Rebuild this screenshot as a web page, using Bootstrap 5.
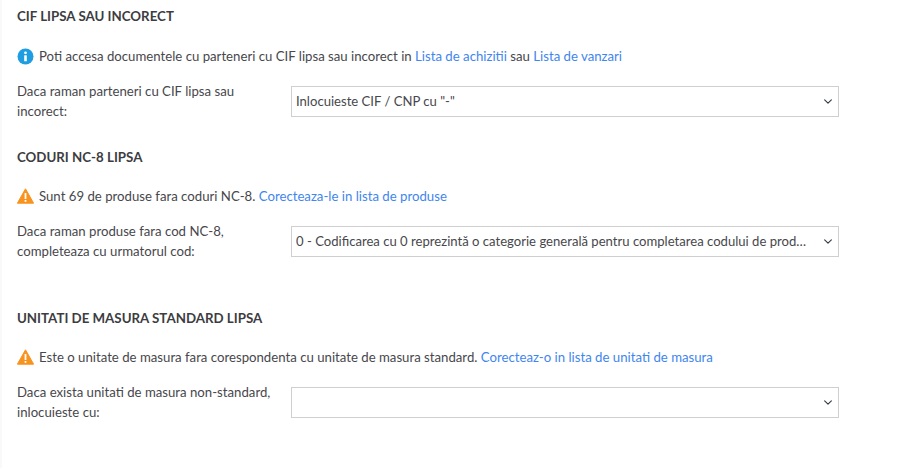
<!DOCTYPE html>
<html>
<head>
    <title>Setari declaratie</title>
    <link rel="stylesheet" href="https://cdn.jsdelivr.net/npm/bootstrap@5.3.0/dist/css/bootstrap.min.css">
    <style>
        body { font-family: Lato, "Liberation Sans", sans-serif; font-size: 13.2px; color: #47474c; background: #fff; overflow: hidden; min-height: 100vh; border-left: 2px solid #f9f9f9; }
        .page-wrap { width: 837px; margin-left: 15px; padding-top: 8px; }
        .sect-title { font-size: 13.3px; font-weight: 700; line-height: 16px; color: #3c3c41; margin: 0 0 20px; text-transform: uppercase; }
        .sect-note { line-height: 24px; margin-bottom: 13px; gap: 5px; }
        .sect-note a { color: #3f86ee; text-decoration: none; }
        .sect-note svg { flex: none; }
        .sect-row { margin-bottom: 28px; }
        .sect-row.extra-gap { margin-bottom: 49px; }
        .sect-title.tight { margin-bottom: 19px; }
        .sect-label { width: 274px; padding-right: 12px; line-height: 20px; flex: none; }
        .sect-select { width: 548px; height: 31px; padding: 0 26px 0 4px; font-size: 13.1px; line-height: 29px; color: #47474c; border: 1px solid #cfcfcf; border-radius: 0; background-position: right 4px center; background-size: 12px 9px; text-overflow: ellipsis; font-family: inherit; }
    </style>
</head>
<body>
    <div class="page-wrap">
        <!-- CIF -->
        <h6 class="sect-title">CIF lipsa sau incorect</h6>
        <div class="sect-note d-flex align-items-center">
            <svg width="17" height="17" viewBox="0 0 17 17"><circle cx="8.5" cy="8.5" r="8" fill="#1e9ee0"/><circle cx="8.5" cy="4.8" r="1.4" fill="#fff"/><rect x="7.2" y="7.2" width="2.6" height="6" rx=".5" fill="#fff"/></svg>
            <span>Poti accesa documentele cu parteneri cu CIF lipsa sau incorect in <a href="#">Lista de achizitii</a> sau <a href="#">Lista de vanzari</a></span>
        </div>
        <div class="sect-row d-flex align-items-center">
            <label class="sect-label">Daca raman parteneri cu CIF lipsa sau incorect:</label>
            <select class="form-select sect-select"><option>Inlocuieste CIF / CNP cu "-"</option></select>
        </div>

        <!-- NC-8 -->
        <h6 class="sect-title tight">Coduri NC-8 lipsa</h6>
        <div class="sect-note d-flex align-items-center">
            <svg width="17" height="16" viewBox="0 0 17 16"><path d="M8.5 .8 16.6 15.2H.4Z" fill="#f7931e" stroke="#f7931e" stroke-linejoin="round"/><rect x="7.6" y="5" width="1.8" height="6" fill="#fff"/><rect x="7.6" y="12" width="1.8" height="1.8" fill="#fff"/></svg>
            <span>Sunt 69 de produse fara coduri NC-8. <a href="#">Corecteaza-le in lista de produse</a></span>
        </div>
        <div class="sect-row extra-gap d-flex align-items-center">
            <label class="sect-label">Daca raman produse fara cod NC-8, completeaza cu urmatorul cod:</label>
            <select class="form-select sect-select"><option>0 - Codificarea cu 0 reprezintă o categorie generală pentru completarea codului de produs lipsa</option></select>
        </div>

        <!-- UM -->
        <h6 class="sect-title tight">Unitati de masura standard lipsa</h6>
        <div class="sect-note d-flex align-items-center">
            <svg width="17" height="16" viewBox="0 0 17 16"><path d="M8.5 .8 16.6 15.2H.4Z" fill="#f7931e" stroke="#f7931e" stroke-linejoin="round"/><rect x="7.6" y="5" width="1.8" height="6" fill="#fff"/><rect x="7.6" y="12" width="1.8" height="1.8" fill="#fff"/></svg>
            <span>Este o unitate de masura fara corespondenta cu unitate de masura standard. <a href="#">Corecteaz-o in lista de unitati de masura</a></span>
        </div>
        <div class="sect-row d-flex align-items-center">
            <label class="sect-label">Daca exista unitati de masura non-standard, inlocuieste cu:</label>
            <select class="form-select sect-select"><option></option></select>
        </div>
    </div>
    <script src="https://cdn.jsdelivr.net/npm/bootstrap@5.3.0/dist/js/bootstrap.bundle.min.js"></script>
</body>
</html>
